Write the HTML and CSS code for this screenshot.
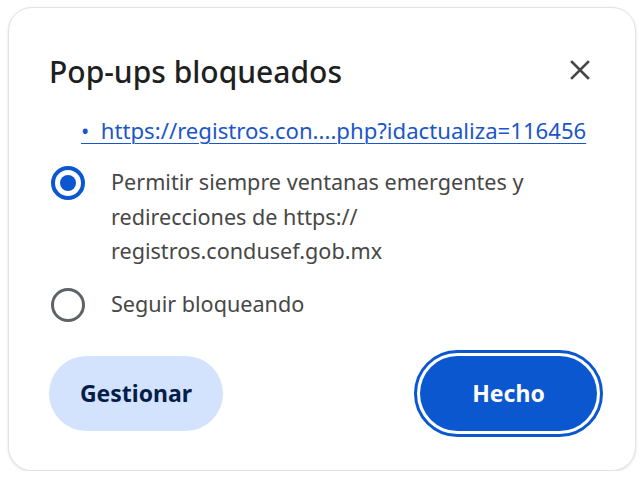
FILE: index.html
```html
<!DOCTYPE html>
<html lang="es">
<head>
<meta charset="utf-8">
<title>Pop-ups bloqueados</title>
<link rel="stylesheet" href="styles.css">
</head>
<body>
<div class="dialog">
  <div class="header">
    <h1 class="title">Pop-ups bloqueados</h1>
    <button class="close" aria-label="Cerrar">
      <svg viewBox="0 0 20 20" width="20" height="20"><path d="M2 2 L18 18 M18 2 L2 18" stroke="#474747" stroke-width="2.6" stroke-linecap="square" fill="none"/></svg>
    </button>
  </div>
  <div class="links">
    <a class="link" href="#">•&nbsp;&nbsp;https://registros.con....php?idactualiza=116456</a>
  </div>
  <div class="options">
    <label class="option">
      <span class="radio checked"></span>
      <span class="option-text">Permitir siempre ventanas emergentes y<br>redirecciones de https://<br>registros.condusef.gob.mx</span>
    </label>
    <label class="option">
      <span class="radio"></span>
      <span class="option-text">Seguir bloqueando</span>
    </label>
  </div>
  <div class="actions">
    <button class="btn tonal">Gestionar</button>
    <button class="btn primary">Hecho</button>
  </div>
</div>
</body>
</html>
```

FILE: styles.css
```css
html, body {
  margin: 0;
  padding: 0;
  background: #ffffff;
}
body {
  font-family: "Noto Sans", "Open Sans", sans-serif;
  padding: 7px 8px 0 8px;
}
.dialog {
  box-sizing: border-box;
  width: 628px;
  height: 464px;
  border: 1px solid #e3e3e3;
  border-radius: 24px;
  box-shadow: 0 1px 3px rgba(0,0,0,0.12);
  background: #fff;
  padding: 44px 40px 0 40px;
  display: flex;
  flex-direction: column;
}
.header {
  display: flex;
  align-items: center;
  justify-content: space-between;
  height: 40px;
}
.title {
  margin: 0;
  font-size: 30px;
  font-weight: 500;
  color: #1f1f1f;
  line-height: 40px;
}
.close {
  border: none;
  background: none;
  padding: 0;
  margin-right: 5px;
  margin-top: -4px;
  width: 20px;
  height: 20px;
  display: flex;
}
.links {
  margin-top: 22px;
  padding-left: 32px;
  height: 32px;
}
.link {
  font-size: 22.15px;
  line-height: 32px;
  color: #1b56c9;
  text-decoration: underline;
  text-underline-offset: 4px;
  text-decoration-thickness: 1px;
}
.options {
  margin-top: 19px;
  display: flex;
  flex-direction: column;
  gap: 18px;
}
.option {
  display: flex;
  align-items: flex-start;
  gap: 26px;
}
.radio {
  box-sizing: border-box;
  flex: none;
  width: 34px;
  height: 34px;
  border-radius: 50%;
  border: 3px solid #5f6368;
  margin-left: 2px;
  margin-top: 1px;
  display: flex;
  align-items: center;
  justify-content: center;
}
.radio.checked {
  border: 4px solid #0b57d0;
}
.radio.checked::after {
  content: "";
  width: 16px;
  height: 16px;
  border-radius: 50%;
  background: #0b57d0;
}
.option-text {
  font-size: 21.6px;
  line-height: 34.5px;
  color: #474747;
}
.actions {
  margin-top: 34px;
  display: flex;
  justify-content: space-between;
  align-items: center;
}
.btn {
  font-family: inherit;
  font-size: 23px;
  font-weight: 700;
  border: none;
  border-radius: 40px;
  height: 75px;
  cursor: pointer;
}
.tonal {
  background: #d3e3fd;
  color: #041e49;
  width: 174px;
}
.primary {
  background: #0b57d0;
  color: #ffffff;
  width: 177px;
  margin-right: -2px;
  outline: 3px solid #0b57d0;
  outline-offset: 3px;
}
```
